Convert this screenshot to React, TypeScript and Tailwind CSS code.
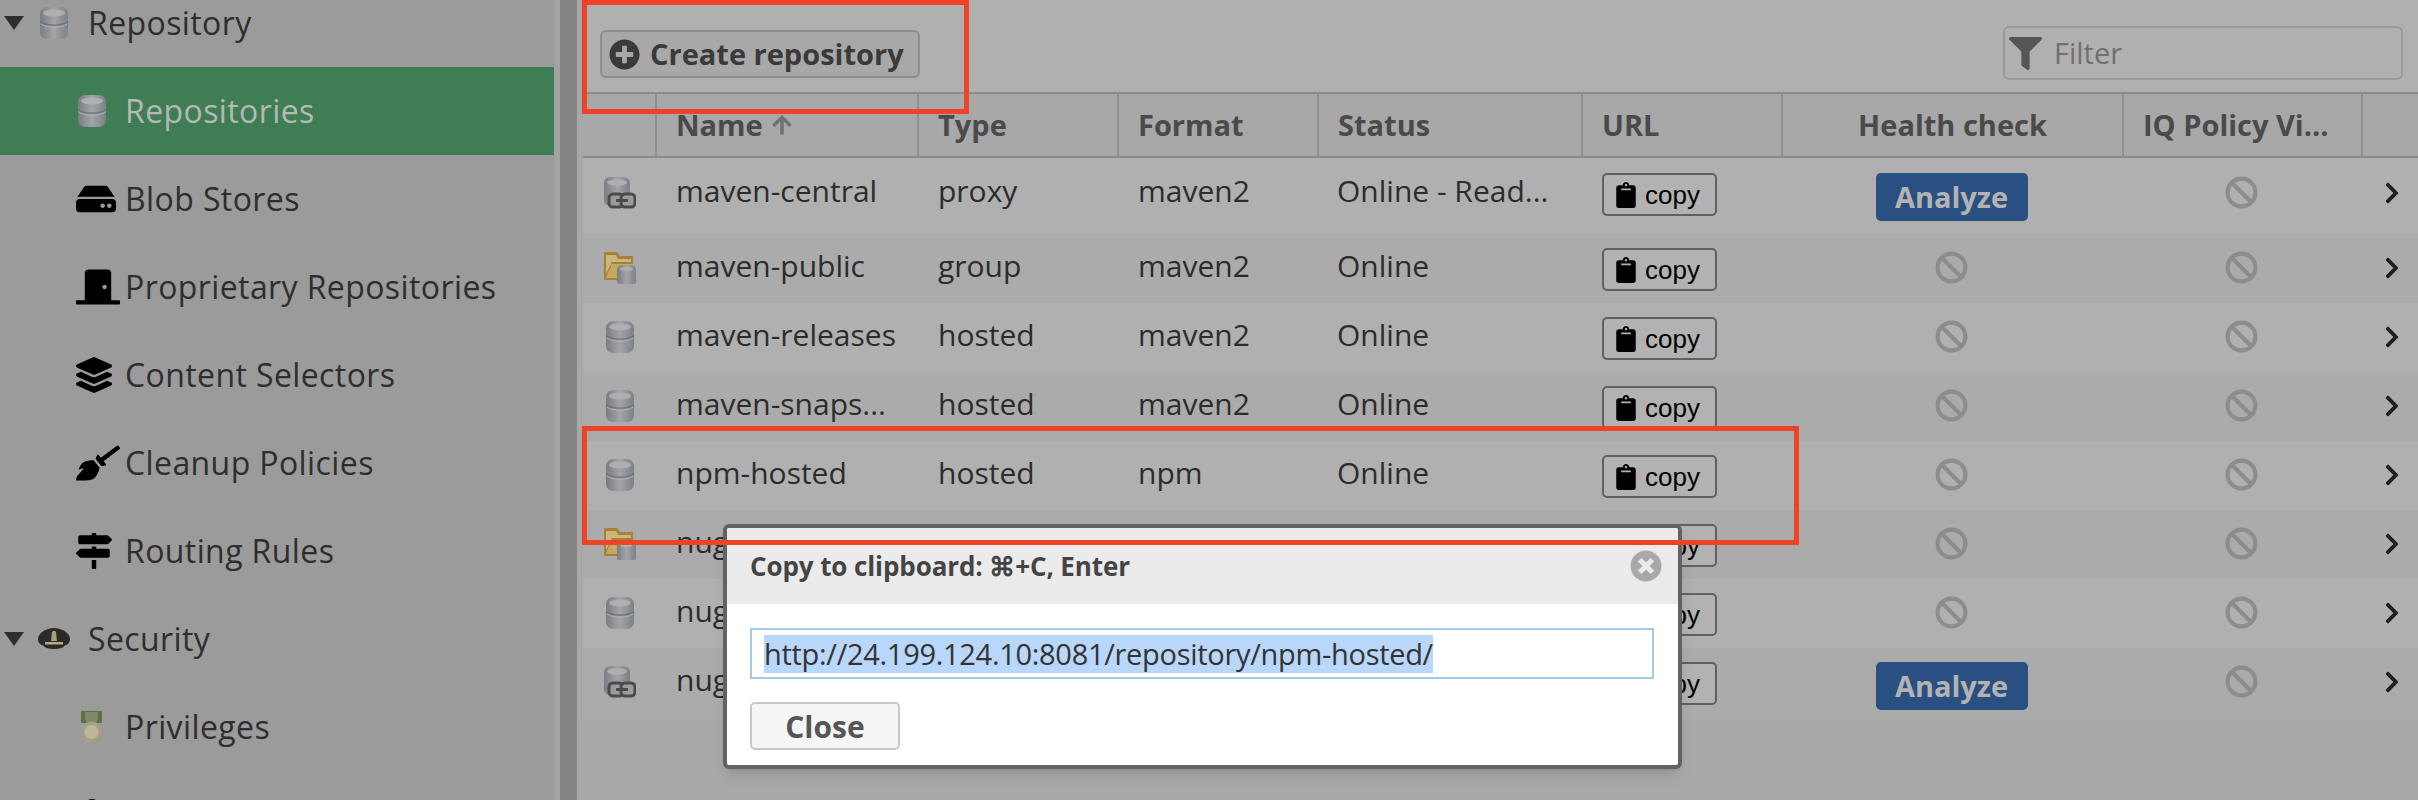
import React from 'react';
import {
  FaHdd,
  FaDoorClosed,
  FaLayerGroup,
  FaBroom,
  FaMapSigns,
  FaClipboard,
  FaBan,
  FaChevronRight,
  FaFilter,
  FaPlusCircle,
  FaTimesCircle,
  FaArrowUp,
  FaUser,
} from 'react-icons/fa';

const DbIcon: React.FC = () => (
  <svg viewBox="0 0 32 32" className="h-8 w-8">
    <defs>
      <linearGradient id="db-fill" x1="0" x2="1" y1="0" y2="0">
        <stop offset="0" stopColor="#797c81" />
        <stop offset="0.5" stopColor="#a2a4a8" />
        <stop offset="1" stopColor="#7d8085" />
      </linearGradient>
    </defs>
    <rect x="2" y="0" width="28" height="32" rx="7" fill="url(#db-fill)" />
    <ellipse cx="16" cy="6" rx="11" ry="3.4" fill="#aeafb1" />
    <path d="M2 14.5c3 2.6 8 3.6 14 3.6s11-1 14-3.6" fill="none" stroke="#6f7276" strokeWidth="1.2" />
    <path d="M3 17c3 2.4 8 3.2 13 3.2S26 19.400 29 17" fill="none" stroke="#b4b5b7" strokeWidth="1" />
  </svg>
);

const ProxyIcon: React.FC = () => (
  <svg viewBox="0 0 32 32" className="h-8 w-8">
    <rect x="0" y="0" width="26" height="29" rx="6" fill="url(#db-fill)" />
    <ellipse cx="13" cy="5.500" rx="10" ry="3.200" fill="#aeafb1" />
    <rect x="5" y="17" width="14" height="13" rx="4" fill="#9c9c9c" stroke="#4a4a4a" strokeWidth="3" />
    <rect x="17" y="17" width="14" height="13" rx="4" fill="#9c9c9c" stroke="#4a4a4a" strokeWidth="3" />
    <rect x="12" y="22" width="12" height="3" fill="#4a4a4a" />
  </svg>
);

const GroupIcon: React.FC = () => (
  <svg viewBox="0 0 32 32" className="h-8 w-8">
    <path d="M0 0h13l3 4h13v24H0z" fill="#a5813f" />
    <path d="M2 3h10l2 4h13v3H8l-6 12z" fill="#cdb678" />
    <path d="M2 25l6-13h21v14H2z" fill="#c4a95f" />
    <rect x="13" y="13" width="19" height="21" rx="5" fill="url(#db-fill)" />
    <ellipse cx="22.500" cy="17" rx="6.500" ry="2.200" fill="#aeafb1" />
  </svg>
);

const HatIcon: React.FC = () => (
  <svg viewBox="0 0 32 24" className="h-6 w-8">
    <path d="M0 12C0 6 8 1 16 1s16 5 16 11c0 4-3 6-6 7-1 4-19 4-20 0-3-1-6-3-6-7z" fill="#2b2a27" />
    <path d="M14 5c0-1.400 4-1.400 4 0l1 9h-6z" fill="#a89e7c" />
    <path d="M7 15h18v2.500H7z" fill="#b5ab85" />
  </svg>
);

const MedalIcon: React.FC = () => (
  <svg viewBox="0 0 32 32" className="h-8 w-8">
    <rect x="5" y="0" width="21" height="12" fill="#5f6f4c" />
    <path d="M9 1h13v7l-2 3h-9l-2-3z" fill="#7f8b68" />
    <circle cx="15.500" cy="21" r="10.500" fill="#a59f84" />
    <circle cx="15.500" cy="21" r="7" fill="#bdb89c" />
  </svg>
);

const TreeParent: React.FC<{ label: string; icon: React.ReactNode }> = ({ label, icon }) => (
  <div className="flex h-[88px] items-center pl-1">
    <div className="mr-[14px] h-0 w-0 border-x-[10px] border-t-[14px] border-x-transparent border-t-[#2e2e2e]" />
    <div className="flex w-[50px] items-center">{icon}</div>
    <span>{label}</span>
  </div>
);

const TreeItem: React.FC<{ label?: string; icon: React.ReactNode; active?: boolean }> = ({ label, icon, active }) => (
  <div className={`flex h-[88px] items-center pl-[76px] ${active ? 'bg-[#3f7d54] text-[#b4b9b5]' : ''}`}>
    <div className="flex w-[49px] items-center text-black">{icon}</div>
    {label && <span>{label}</span>}
  </div>
);

const Sidebar: React.FC = () => (
  <aside className="w-[555px] shrink-0 overflow-hidden border-r border-[#a0a0a0] bg-[#9b9b9b] text-[32px] tracking-[0.4px] text-[#2e2e2e]">
    <div className="-mt-[21px]">
      <TreeParent label="Repository" icon={<DbIcon />} />
      <TreeItem label="Repositories" icon={<DbIcon />} active />
      <TreeItem label="Blob Stores" icon={<FaHdd size={40} />} />
      <TreeItem label="Proprietary Repositories" icon={<FaDoorClosed size={44} />} />
      <TreeItem label="Content Selectors" icon={<FaLayerGroup size={36} />} />
      <TreeItem label="Cleanup Policies" icon={<FaBroom size={44} />} />
      <TreeItem label="Routing Rules" icon={<FaMapSigns size={36} />} />
      <TreeParent label="Security" icon={<HatIcon />} />
      <TreeItem label="Privileges" icon={<MedalIcon />} />
      <TreeItem icon={<FaUser size={32} />} />
    </div>
  </aside>
);

const COLS = 'grid grid-cols-[72px_262px_200px_200px_264px_200px_341px_239px_57px]';

const CopyButton: React.FC = () => (
  <div className="mt-[14px] ml-[21px] flex h-[43px] w-[115px] items-center rounded-[5px] border-2 border-[#606060] bg-[#b2b2b2] pl-[9px] font-['Liberation_Sans',sans-serif] text-[26px] leading-none text-black">
    <FaClipboard size={26} />
    <span className="ml-[6px]">copy</span>
  </div>
);

const Analyze: React.FC = () => (
  <div className="mx-auto mt-[14px] flex h-[48px] w-[152px] items-center justify-center rounded-[5px] bg-[#2a5082] text-[29px] font-bold text-[#b3b3b3]">
    Analyze
  </div>
);

const Blocked: React.FC = () => (
  <div className="flex justify-center pt-[17px] text-[#8c8c8c]">
    <FaBan size={33} />
  </div>
);

type Repo = {
  icon: 'db' | 'proxy' | 'group';
  name: string;
  type: string;
  format: string;
  status: string;
  analyze?: boolean;
  rowClass: string;
};

const REPOS: Repo[] = [
  { icon: 'proxy', name: 'maven-central', type: 'proxy', format: 'maven2', status: 'Online - Read...', analyze: true, rowClass: 'h-[76px] pt-[1px] bg-[#b0b0b0]' },
  { icon: 'group', name: 'maven-public', type: 'group', format: 'maven2', status: 'Online', rowClass: 'h-[69px] bg-[#ababab]' },
  { icon: 'db', name: 'maven-releases', type: 'hosted', format: 'maven2', status: 'Online', rowClass: 'h-[69px] bg-[#b0b0b0]' },
  { icon: 'db', name: 'maven-snaps...', type: 'hosted', format: 'maven2', status: 'Online', rowClass: 'h-[69px] bg-[#ababab]' },
  { icon: 'db', name: 'npm-hosted', type: 'hosted', format: 'npm', status: 'Online', rowClass: 'h-[69px] bg-[#b0b0b0]' },
  { icon: 'group', name: 'nuget-group', type: 'group', format: 'nuget', status: 'Online', rowClass: 'h-[69px] bg-[#ababab]' },
  { icon: 'db', name: 'nuget-hosted', type: 'hosted', format: 'nuget', status: 'Online', rowClass: 'h-[69px] bg-[#b0b0b0]' },
  { icon: 'proxy', name: 'nuget.org-proxy', type: 'proxy', format: 'nuget', status: 'Online', analyze: true, rowClass: 'h-[73px] bg-[#ababab]' },
];

const HeaderCell: React.FC<{ children?: React.ReactNode; center?: boolean }> = ({ children, center }) => (
  <div className={`flex items-center truncate border-l-2 border-[#8f8f8f] ${center ? 'justify-center' : 'pl-[19px]'}`}>{children}</div>
);

const RepoRow: React.FC<{ repo: Repo }> = ({ repo }) => (
  <div className={`${COLS} ${repo.rowClass}`}>
    <div className="pt-[18px] pl-[21px]">
      {repo.icon === 'db' && <DbIcon />}
      {repo.icon === 'proxy' && <ProxyIcon />}
      {repo.icon === 'group' && <GroupIcon />}
    </div>
    <div className="pt-[15px] pl-[21px] leading-[34px]">{repo.name}</div>
    <div className="pt-[15px] pl-[21px] leading-[34px]">{repo.type}</div>
    <div className="pt-[15px] pl-[21px] leading-[34px]">{repo.format}</div>
    <div className="pt-[15px] pl-[20px] leading-[34px]">{repo.status}</div>
    <div><CopyButton /></div>
    <div>{repo.analyze ? <Analyze /> : <Blocked />}</div>
    <Blocked />
    <div className="pt-[22px] pl-[19px] text-[#1f1f1f]">
      <FaChevronRight size={24} />
    </div>
  </div>
);

const CopyModal: React.FC = () => (
  <div className="absolute top-[524px] left-[723px] h-[245px] w-[959px] overflow-hidden rounded-md border-4 border-[#626262] bg-white shadow-lg">
    <div className="flex h-[76px] items-center justify-between bg-[#ebebeb] pr-4 pl-[23px]">
      <span className="text-[26px] font-bold tracking-[-0.1px] text-[#444444]">Copy to clipboard: ⌘+C, Enter</span>
      <FaTimesCircle size={32} className="text-[#a8a8a8]" />
    </div>
    <div className="mx-[23px] mt-[24px] flex h-[51px] w-[904px] items-center border-2 border-[#a3cbe8] pl-3 text-[29px] tracking-[-0.3px] text-[#333333]">
      <span className="inline-block h-[38px] bg-[#b9d6fb] leading-[38px]">http://24.199.124.10:8081/repository/npm-hosted/</span>
    </div>
    <div className="mt-[23px] ml-[23px] flex h-[48px] w-[150px] items-center justify-center rounded-[5px] border-2 border-[#c8c8c8] bg-[#f5f5f5] text-[30px] font-bold text-[#555555]">
      Close
    </div>
  </div>
);

export default function App() {
  return (
    <div className="relative flex h-[800px] w-[2418px] overflow-hidden bg-[#a9a9a9] font-['Open_Sans',sans-serif]">
      <Sidebar />
      <div className="w-[5px] shrink-0 bg-[#a3a3a3]" />
      <div className="w-[17px] shrink-0 bg-[#858585]" />
      <div className="w-[6px] shrink-0 bg-[#a8a8a8]" />
      <main className="flex-1 text-[30px] text-[#2c2c2c]">
        <div className="flex h-[92px] items-start justify-between bg-[#b0b0b0] pr-[15px] pl-[17px]">
          <div className="mt-[30px] flex h-[48px] w-[320px] items-center rounded-md border-2 border-[#8d8d8d] bg-[#a8a8a8] pl-[7px] text-[29px] font-bold text-[#3a3a3a]">
            <FaPlusCircle size={31} />
            <span className="ml-[10px]">Create repository</span>
          </div>
          <div className="mt-[26px] flex h-[54px] w-[400px] items-center rounded-md border-2 border-[#9a9a9a] pl-[4px] text-[29px] text-[#707070]">
            <FaFilter size={33} className="text-[#555555]" />
            <span className="ml-[12px]">Filter</span>
          </div>
        </div>
        <div className={`${COLS} h-[66px] border-y-2 border-[#8c8c8c] bg-[#a8a8a8] text-[29px] font-bold text-[#4a4a4a]`}>
          <div />
          <HeaderCell>
            Name
            <FaArrowUp size={22} className="ml-[8px] text-[#707070]" />
          </HeaderCell>
          <HeaderCell>Type</HeaderCell>
          <HeaderCell>Format</HeaderCell>
          <HeaderCell>Status</HeaderCell>
          <HeaderCell>URL</HeaderCell>
          <HeaderCell center>Health check</HeaderCell>
          <HeaderCell>IQ Policy Vi...</HeaderCell>
          <HeaderCell />
        </div>
        {REPOS.map((repo) => (
          <RepoRow key={repo.name} repo={repo} />
        ))}
      </main>
      <CopyModal />
      {/* Annotation boxes drawn over the screenshot */}
      <div className="absolute top-0 left-[582px] h-[114px] w-[387px] border-[5px] border-[#ee4328]" />
      <div className="absolute top-[426px] left-[582px] h-[119px] w-[1217px] border-[5px] border-[#ee4328]" />
    </div>
  );
}
